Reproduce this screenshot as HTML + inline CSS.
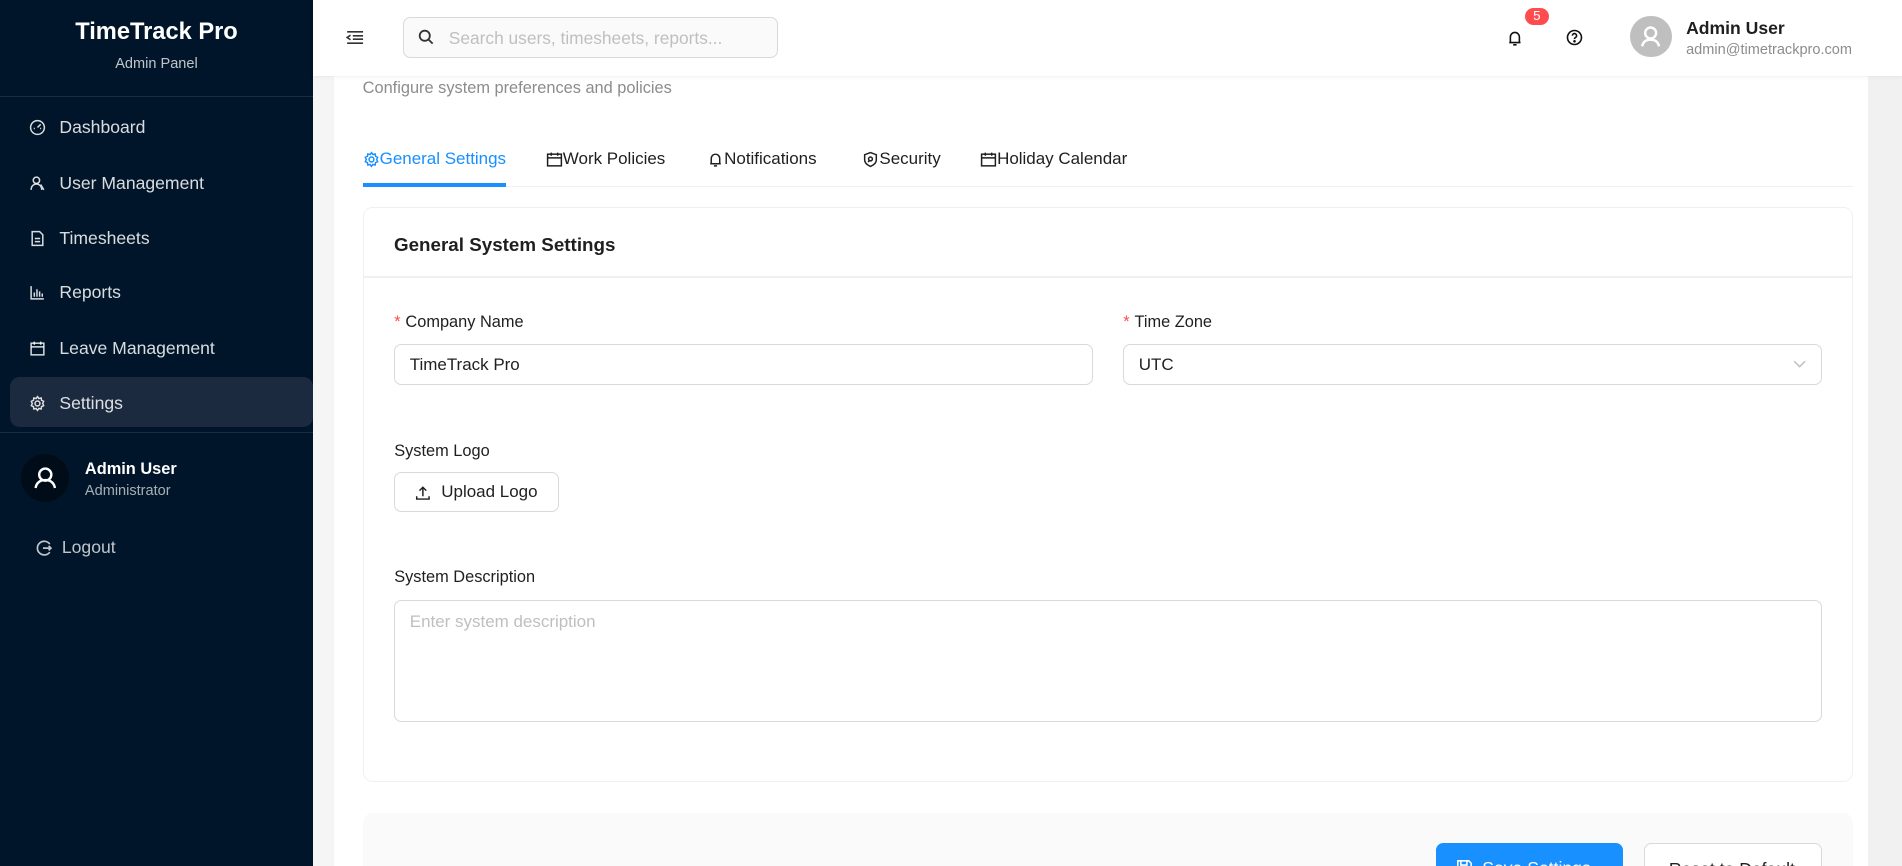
<!DOCTYPE html>
<html><head><meta charset="utf-8"><style>
*{box-sizing:border-box;margin:0;padding:0}
html,body{width:1902px;height:866px;overflow:hidden}
body{font-family:"Liberation Sans",sans-serif;background:#f0f2f5}
#root{zoom:1.21301;width:1568px;height:714px;position:relative;overflow:hidden;background:#f5f5f5}
.sb{position:absolute;left:0;top:0;width:258px;height:714px;background:#001529;color:rgba(255,255,255,.85)}
.abs{position:absolute}
.mi{position:absolute;left:8px;width:250px;height:41px;display:flex;align-items:center;padding-left:16px;padding-top:2px;font-size:14.5px;border-radius:8px}
.mi svg{width:14px;height:14px;margin-right:11px;stroke:rgba(255,255,255,.85);fill:none;stroke-width:1.4}
.hdr{position:absolute;left:258px;top:0;right:0;height:63px;background:#fff;box-shadow:0 1px 4px rgba(0,0,0,.06);z-index:2}
.card{position:absolute;left:275px;top:0;width:1265px;height:714px;background:#fff}
.lbl{position:absolute;font-size:13.5px;color:#1f1f1f;margin-top:1px}
.lbl b{color:#ff4d4f;font-weight:normal;margin-right:4px}
.inp{position:absolute;border:1px solid #d9d9d9;border-radius:6px;background:#fff;font-size:14px;color:#1f1f1f;padding-left:12px;padding-top:1px;display:flex;align-items:center}
.tab{position:absolute;top:123px;font-size:14px;color:#1f1f1f;display:flex;align-items:center}
.tab svg{width:14px;height:14px;fill:none;stroke:#1f1f1f;stroke-width:1.4}
</style></head><body><div id="root">
<div class="sb">
  <div class="abs" style="left:0;width:258px;top:16px;text-align:center;font-size:19.5px;font-weight:bold;color:#fff">TimeTrack Pro</div>
  <div class="abs" style="left:0;width:258px;top:46px;text-align:center;font-size:12px;color:rgba(255,255,255,.75)">Admin Panel</div>
  <div class="abs" style="left:0;top:79px;width:258px;height:1px;background:#1c2b3e"></div>
  <div class="mi" style="top:84px"><svg viewBox="0 0 16 16"><circle cx="8" cy="8" r="6.5"/><path d="M8 8l3-3M4.5 9h1M10.5 9h1"/></svg>Dashboard</div>
  <div class="mi" style="top:130px"><svg viewBox="0 0 16 16"><circle cx="7" cy="5" r="3"/><path d="M2 14c0-4 3-5.5 5-5.5s5 1.5 5 5.5M11 9l3 5"/></svg>User Management</div>
  <div class="mi" style="top:175px"><svg viewBox="0 0 16 16"><path d="M3 1.5h7l3 3v10H3z M5.5 8h5M5.5 11h5"/></svg>Timesheets</div>
  <div class="mi" style="top:220px"><svg viewBox="0 0 16 16"><path d="M2 2v12h12M5 12V8M7.5 12V5M10 12V7M12.5 12V9"/></svg>Reports</div>
  <div class="mi" style="top:266px"><svg viewBox="0 0 16 16"><rect x="2" y="3" width="12" height="11"/><path d="M2 6.5h12M5 1.5v3M11 1.5v3"/></svg>Leave Management</div>
  <div class="mi" style="top:311px;background:#1b2a3e"><svg viewBox="0 0 16 16"><circle cx="8" cy="8" r="2.3"/><path d="M8 1.5l1.3 1.8 2.2-.5.3 2.2 2 1-.9 2 .9 2-2 1-.3 2.2-2.2-.5L8 14.5l-1.3-1.8-2.2.5-.3-2.2-2-1 .9-2-.9-2 2-1 .3-2.2 2.2.5z"/></svg>Settings</div>
  <div class="abs" style="left:0;top:356px;width:258px;height:1px;background:#1c2b3e"></div>
  <div class="abs" style="left:17px;top:374px;width:40px;height:40px;border-radius:50%;background:#000c17"><svg viewBox="0 0 40 40" width="40" height="40" fill="none" stroke="#fff" stroke-width="2"><circle cx="20" cy="17" r="5"/><path d="M12 28c1-5 4-6.5 8-6.5s7 1.5 8 6.5"/></svg></div>
  <div class="abs" style="left:70px;top:379px;font-size:13.5px;font-weight:bold;color:#fff">Admin User</div>
  <div class="abs" style="left:70px;top:398px;font-size:12px;color:rgba(255,255,255,.65)">Administrator</div>
  <svg class="abs" style="left:29px;top:444px" width="15" height="15" viewBox="0 0 16 16" fill="none" stroke="rgba(255,255,255,.75)" stroke-width="1.5"><path d="M13 4.5A6 6 0 1 0 13 11.5M7 8h7M12 6l2 2-2 2"/></svg>
  <div class="abs" style="left:51px;top:443px;font-size:14.5px;color:rgba(255,255,255,.75)">Logout</div>
</div>
<div class="hdr">
  <svg class="abs" style="left:27px;top:24px" width="15" height="14" viewBox="0 0 16 14" fill="none" stroke="#333" stroke-width="1.4"><path d="M1 2h14M6 5.5h9M6 8.5h9M1 12h14M4 5l-3 2 3 2"/></svg>
  <div class="abs" style="left:74px;top:14px;width:309px;height:34px;border:1px solid #d9d9d9;border-radius:6px;background:#fafafa"></div>
  <svg class="abs" style="left:87px;top:24px" width="13" height="13" viewBox="0 0 14 14" fill="none" stroke="#333" stroke-width="1.6"><circle cx="6" cy="6" r="4.5"/><path d="M9.3 9.3L13 13"/></svg>
  <div class="abs" style="left:112px;top:23px;font-size:14.3px;color:#bfbfbf">Search users, timesheets, reports...</div>
  <svg class="abs" style="left:984px;top:24px" width="13" height="15" viewBox="0 0 14 16" fill="none" stroke="#111" stroke-width="1.4"><path d="M3 12V7a4 4 0 0 1 8 0v5H2h10M5.5 14h3"/></svg>
  <div class="abs" style="left:999px;top:7px;width:20px;height:14px;border-radius:8px;background:#ff4d4f;color:#fff;font-size:11px;text-align:center;line-height:14px">5</div>
  <svg class="abs" style="left:1033px;top:24px" width="14" height="14" viewBox="0 0 16 16" fill="none" stroke="#111" stroke-width="1.5"><circle cx="8" cy="8" r="6.6"/><path d="M6 6.3a2 2 0 1 1 2.6 1.9c-.6.3-.6.7-.6 1.4"/><circle cx="8" cy="11.6" r=".5" fill="#111"/></svg>
  <div class="abs" style="left:1086px;top:13px;width:34px;height:34px;border-radius:50%;background:#bfbfbf"><svg viewBox="0 0 34 34" width="34" height="34" fill="none" stroke="#fff" stroke-width="2"><circle cx="17" cy="14" r="4.5"/><path d="M10 25c1-4.5 4-5.5 7-5.5s6 1 7 5.5"/></svg></div>
  <div class="abs" style="left:1132px;top:15px;font-size:14.5px;font-weight:bold;color:#1f1f1f">Admin User</div>
  <div class="abs" style="left:1132px;top:35px;font-size:12px;color:#8c8c8c">admin@timetrackpro.com</div>
</div>
<div class="abs" style="left:1540px;top:63px;width:28px;height:651px;background:#f1f1f1"></div>
<div class="card">
  <div class="abs" style="left:24px;top:65px;font-size:13.5px;color:#8c8c8c">Configure system preferences and policies</div>
  <div class="tab" style="left:24px;color:#1890ff"><svg viewBox="0 0 16 16" style="stroke:#1890ff"><circle cx="8" cy="8" r="2.3"/><path d="M8 1.5l1.3 1.8 2.2-.5.3 2.2 2 1-.9 2 .9 2-2 1-.3 2.2-2.2-.5L8 14.5l-1.3-1.8-2.2.5-.3-2.2-2-1 .9-2-.9-2 2-1 .3-2.2 2.2.5z"/></svg>General Settings</div>
  <div class="tab" style="left:175px"><svg viewBox="0 0 16 16"><rect x="1.5" y="3" width="13" height="11"/><path d="M1.5 6.5h13M5 1.5v3M11 1.5v3"/></svg>Work Policies</div>
  <div class="tab" style="left:308px"><svg viewBox="0 0 14 16"><path d="M3 12V7a4 4 0 0 1 8 0v5H2h10M5.5 14h3"/></svg>Notifications</div>
  <div class="tab" style="left:436px"><svg viewBox="0 0 16 16"><path d="M8 1.5l5.5 2v5c0 3-3 5-5.5 6-2.5-1-5.5-3-5.5-6v-5z"/><circle cx="8" cy="7.5" r="1.8"/><path d="M6.8 9l-1 1.5"/></svg>Security</div>
  <div class="tab" style="left:533px"><svg viewBox="0 0 16 16"><rect x="1.5" y="3" width="13" height="11"/><path d="M1.5 6.5h13M5 1.5v3M11 1.5v3"/></svg>Holiday Calendar</div>
  <div class="abs" style="left:24px;top:153px;width:1229px;height:1px;background:#f0f0f0"></div>
  <div class="abs" style="left:24px;top:151px;width:118px;height:3px;background:#1890ff"></div>
  <div class="abs" style="left:24px;top:171px;width:1229px;height:474px;border:1px solid #f0f0f0;border-radius:8px">
    <div class="abs" style="left:25px;top:21px;font-size:15.5px;font-weight:bold;color:#1f1f1f">General System Settings</div>
    <div class="abs" style="left:0;top:56px;width:1227px;height:1px;background:#f0f0f0"></div>
  </div>
  <div class="lbl" style="left:50px;top:257px"><b>*</b>Company Name</div>
  <div class="inp" style="left:50px;top:284px;width:576px;height:33px">TimeTrack Pro</div>
  <div class="lbl" style="left:651px;top:257px"><b>*</b>Time Zone</div>
  <div class="inp" style="left:651px;top:284px;width:576px;height:33px">UTC<svg style="position:absolute;right:12px;top:12px" width="11" height="7" viewBox="0 0 11 7" fill="none" stroke="#bfbfbf" stroke-width="1.2"><path d="M1 1l4.5 4.5L10 1"/></svg></div>
  <div class="lbl" style="left:50px;top:363px">System Logo</div>
  <div class="inp" style="left:50px;top:389px;width:136px;height:33px;padding-left:16px;font-size:14px"><svg width="13" height="13" viewBox="0 0 14 14" fill="none" stroke="#1f1f1f" stroke-width="1.3" style="margin-right:9px"><path d="M7 10V2M4 5l3-3 3 3M1.5 10v2.5h11V10"/></svg>Upload Logo</div>
  <div class="lbl" style="left:50px;top:467px">System Description</div>
  <div class="inp" style="left:50px;top:495px;width:1177px;height:100px;align-items:flex-start;padding-top:9px;color:#bfbfbf">Enter system description</div>
  <div class="abs" style="left:24px;top:670px;width:1229px;height:60px;background:#fafafa;border-radius:8px"></div>
  <div class="abs" style="left:909px;top:695px;width:154px;height:40px;background:#1890ff;border-radius:6px;color:#fff;font-size:14.5px;padding:12px 0 0 16px"><svg width="14" height="14" viewBox="0 0 14 14" fill="none" stroke="#fff" stroke-width="1.3" style="vertical-align:-2px;margin-right:8px"><path d="M1.5 1.5h9l2 2v9h-11z M4 1.5v3.5h5V1.5"/></svg>Save Settings</div>
  <div class="abs" style="left:1080px;top:695px;width:147px;height:40px;background:#fff;border:1px solid #d9d9d9;border-radius:6px;font-size:14.5px;padding:12px 0 0 20px;color:#1f1f1f">Reset to Default</div>
</div>
</div></body></html>
